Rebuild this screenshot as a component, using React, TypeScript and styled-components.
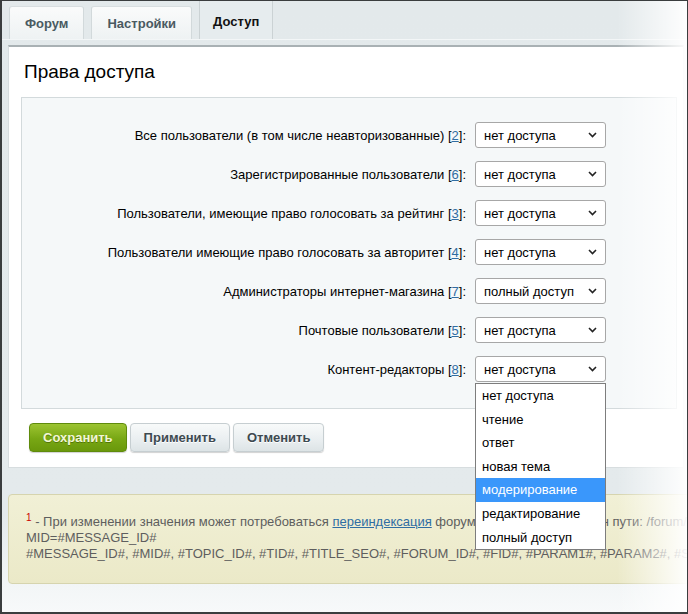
import React from 'react';
import styled, { createGlobalStyle } from 'styled-components';

const GlobalStyle = createGlobalStyle`
  body {
    margin: 0;
    font-family: "Liberation Sans", Arial, sans-serif;
  }
`;

const Frame = styled.div`
  position: relative;
  width: 688px;
  height: 614px;
  box-sizing: border-box;
  overflow: hidden;
  border-style: solid;
  border-color: #3a3d3e;
  border-width: 1px 1px 2px 2px;
  background: linear-gradient(to bottom, #e3e9eb 0, #e4eaec 84%, #f3f6f7 96%, #f7f9fa 100%);
`;

const Fade = styled.div`
  position: absolute;
  top: 0;
  right: 0;
  bottom: 0;
  width: 70px;
  pointer-events: none;
  background: linear-gradient(to right, rgba(255, 255, 255, 0), rgba(255, 255, 255, 0.95));
`;

const TabBar = styled.div`
  display: flex;
  align-items: flex-end;
  gap: 7px;
  height: 38px;
  padding-left: 7px;
  border-bottom: 1px solid #f3f6f7;
`;

const Tab = styled.div<{ $active?: boolean }>`
  box-sizing: border-box;
  height: ${p => (p.$active ? '38px' : '33px')};
  padding: ${p => (p.$active ? '3px 13px 0' : '0 15px')};
  display: flex;
  align-items: center;
  font-size: 13px;
  font-weight: bold;
  color: ${p => (p.$active ? '#111' : '#4a5a61')};
  border: 1px solid ${p => (p.$active ? '#cbd2d4' : '#d2d9db')};
  border-top: ${p => (p.$active ? 'none' : '1px solid #d8dee0')};
  border-bottom: none;
  border-radius: ${p => (p.$active ? '0' : '3px 3px 0 0')};
  background: ${p => (p.$active ? '#e6ecee' : 'linear-gradient(to bottom, #fafbfb, #eef2f3)')};
`;

const Panel = styled.div`
  margin: 5px 3px 0 6px;
  background: #fff;
  border: 1px solid #d7dddf;
  border-top: 2px solid #a9b1b4;
  padding: 14px 0 15px;
`;

const Title = styled.h2`
  margin: 0 0 14px 15px;
  font-size: 19px;
  font-weight: normal;
  line-height: 22px;
  color: #000;
`;

const FieldBox = styled.div`
  margin: 0 6px 0 12px;
  padding: 24px 0 26px;
  background: #f5f8f9;
  border: 1px solid #d3dadc;
  display: flex;
  flex-direction: column;
  gap: 13px;
`;

const Row = styled.div`
  display: grid;
  grid-template-columns: 444px 131px;
  column-gap: 9px;
  align-items: center;
`;

const Label = styled.span`
  text-align: right;
  font-size: 13px;
  color: #000;
  white-space: nowrap;
`;

const NoteLink = styled.a`
  color: #2f6da3;
  text-decoration: underline;
`;

const SelectWrap = styled.div`
  position: relative;
`;

const Select = styled.div`
  box-sizing: border-box;
  height: 26px;
  padding: 0 8px 0 8px;
  display: flex;
  align-items: center;
  justify-content: space-between;
  background: #fff;
  border: 1px solid #a7a7a7;
  border-radius: 3px;
  font-size: 13px;
  color: #000;
`;

const Options = styled.ul`
  position: absolute;
  top: 27px;
  left: 0;
  width: 131px;
  box-sizing: border-box;
  margin: 0;
  padding: 0;
  list-style: none;
  background: #fff;
  border: 1px solid #7d7d7d;
  z-index: 5;
`;

const Option = styled.li<{ $selected?: boolean }>`
  height: 23.6px;
  line-height: 23.6px;
  padding-left: 6px;
  font-size: 13px;
  color: ${p => (p.$selected ? '#fff' : '#000')};
  background: ${p => (p.$selected ? '#3a97fb' : 'transparent')};
`;

const Buttons = styled.div`
  display: flex;
  gap: 3px;
  margin: 14px 0 0 20px;
`;

const Button = styled.button<{ $primary?: boolean }>`
  height: 29px;
  padding: 0 13px;
  font-family: inherit;
  font-size: 13px;
  font-weight: bold;
  border-radius: 4px;
  border: 1px solid ${p => (p.$primary ? '#5f8b0c' : '#c6ced1')};
  color: ${p => (p.$primary ? '#f2f6d6' : '#3d4a50')};
  background: ${p =>
    p.$primary
      ? 'linear-gradient(to bottom, #9cc431, #78a714 55%, #6a980b)'
      : 'linear-gradient(to bottom, #f8fafa, #e9eef0 60%, #dde4e6)'};
  box-shadow: 0 1px 1px rgba(0, 0, 0, 0.18);
  text-shadow: ${p => (p.$primary ? '0 1px 0 rgba(60, 90, 0, 0.6)' : '0 1px 0 #fff')};
`;

const Footnote = styled.div`
  margin: 26px 0 0 6px;
  width: 700px;
  box-sizing: border-box;
  height: 90px;
  padding: 19px 0 0 17px;
  border: 1px solid #d6d4ae;
  border-radius: 4px;
  background: linear-gradient(to bottom, #f1f0d6, #ebe9c8);
  font-size: 13px;
  line-height: 16px;
  color: #5e5e5e;
  white-space: nowrap;
`;

const Sup = styled.sup`
  color: #c00;
  font-size: 10px;
  line-height: 0;
  vertical-align: 5px;
`;

const Chevron = () => (
  <svg width="9" height="6" viewBox="0 0 9 6">
    <polyline points="1,1 4.5,4.5 8,1" fill="none" stroke="#222" strokeWidth="1.6" />
  </svg>
);

interface Field {
  label: string;
  note: string;
  value: string;
}

const fields: Field[] = [
  { label: 'Все пользователи (в том числе неавторизованные)', note: '2', value: 'нет доступа' },
  { label: 'Зарегистрированные пользователи', note: '6', value: 'нет доступа' },
  { label: 'Пользователи, имеющие право голосовать за рейтинг', note: '3', value: 'нет доступа' },
  { label: 'Пользователи имеющие право голосовать за авторитет', note: '4', value: 'нет доступа' },
  { label: 'Администраторы интернет-магазина', note: '7', value: 'полный доступ' },
  { label: 'Почтовые пользователи', note: '5', value: 'нет доступа' },
  { label: 'Контент-редакторы', note: '8', value: 'нет доступа' },
];

const options = ['нет доступа', 'чтение', 'ответ', 'новая тема', 'модерирование', 'редактирование', 'полный доступ'];

const App = () => {
  return (
    <Frame>
      <GlobalStyle />
      <TabBar>
        <Tab>Форум</Tab>
        <Tab>Настройки</Tab>
        <Tab $active>Доступ</Tab>
      </TabBar>

      <Panel>
        <Title>Права доступа</Title>
        <FieldBox>
          {fields.map((f, i) => (
            <Row key={f.note}>
              <Label>
                {f.label} [<NoteLink href="#">{f.note}</NoteLink>]:
              </Label>
              <SelectWrap>
                <Select>
                  {f.value}
                  <Chevron />
                </Select>
                {i === fields.length - 1 && (
                  <Options>
                    {options.map(o => (
                      <Option key={o} $selected={o === 'модерирование'}>
                        {o}
                      </Option>
                    ))}
                  </Options>
                )}
              </SelectWrap>
            </Row>
          ))}
        </FieldBox>
        <Buttons>
          <Button $primary>Сохранить</Button>
          <Button>Применить</Button>
          <Button>Отменить</Button>
        </Buttons>
      </Panel>

      <Footnote>
        <Sup>1</Sup> - При изменении значения может потребоваться <NoteLink href="#">переиндексация</NoteLink> форума для поиска. Шаблон пути: /forum/index.php
        <br />
        MID=#MESSAGE_ID#
        <br />
        #MESSAGE_ID#, #MID#, #TOPIC_ID#, #TID#, #TITLE_SEO#, #FORUM_ID#, #FID#, #PARAM1#, #PARAM2#, #SITE_ID#
      </Footnote>

      <Fade />
    </Frame>
  );
};

export default App;
